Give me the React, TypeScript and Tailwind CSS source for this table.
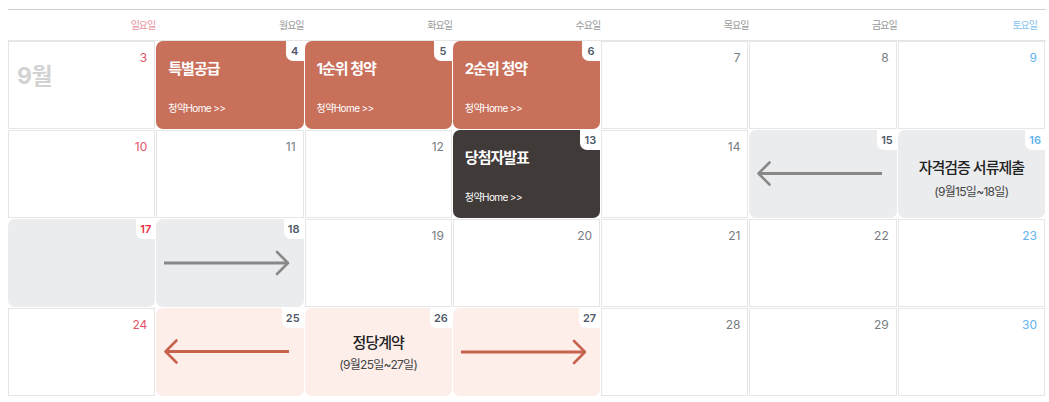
import React from "react";

const FONT = { fontFamily: 'Inter, "Noto Sans CJK KR", "Noto Sans", sans-serif' };

function Badge({ n, color }: { n: number; color: string }) {
  return (
    <div
      className={`absolute top-0 right-0 h-[20px] min-w-[18px] px-[4px] bg-white rounded-bl-[7px] flex items-center justify-center text-[11px] font-semibold leading-none ${color}`}
    >
      {n}
    </div>
  );
}

function Arrow({ dir, color }: { dir: "left" | "right"; color: string }) {
  return (
    <svg className="absolute inset-0" width="147" height="88" viewBox="0 0 147 88" fill="none">
      {dir === "left" ? (
        <>
          <path d="M133 43.5 H9" stroke={color} strokeWidth="3" />
          <path d="M20.5 32.5 L9.5 43.5 L20.5 54.5" stroke={color} strokeWidth="2.6" strokeLinecap="round" strokeLinejoin="round" />
        </>
      ) : (
        <>
          <path d="M8 44 H132" stroke={color} strokeWidth="3" />
          <path d="M121 33 L132 44 L121 55" stroke={color} strokeWidth="2.6" strokeLinecap="round" strokeLinejoin="round" />
        </>
      )}
    </svg>
  );
}

function Plain({ n, color, month }: { n: number; color: string; month?: boolean }) {
  return (
    <div className="border border-[#e6e6e6] bg-white flex justify-between">
      <div className="pl-[8px] pt-[20px] leading-[28px] text-[23px] font-bold text-[#d2d2d2] tracking-[-0.5px]">
        {month ? "9월" : ""}
      </div>
      <div className={`pt-[9px] pr-[7px] leading-[14px] text-[12px] ${color}`}>{n}</div>
    </div>
  );
}

function Event({ n, title, dark }: { n: number; title: string; dark?: boolean }) {
  return (
    <div className={`relative rounded-[7px] ${dark ? "bg-[#403a39]" : "bg-[#c9705b]"} text-white pl-[12px] pt-[18px]`}>
      <Badge n={n} color="text-[#505868]" />
      <div className="text-[15px] font-bold leading-[20px] tracking-[-1px]">{title}</div>
      <div className="mt-[22px] text-[10px] leading-[14px] tracking-[-0.6px]">청약Home &gt;&gt;</div>
    </div>
  );
}

function Block({
  n,
  bg,
  numColor,
  children,
}: {
  n: number;
  bg: string;
  numColor: string;
  children?: React.ReactNode;
}) {
  return (
    <div className={`relative rounded-[7px] ${bg}`}>
      {children}
      <Badge n={n} color={numColor} />
    </div>
  );
}

const SUN = "text-[#e5536b]";
const SAT = "text-[#62b4ef]";
const WK = "text-[#777b82]";

export default function App() {
  const labels = ["일요일", "월요일", "화요일", "수요일", "목요일", "금요일", "토요일"];
  const labelColors = ["text-[#e8929e]", "text-[#999]", "text-[#999]", "text-[#999]", "text-[#999]", "text-[#999]", "text-[#86c2ef]"];
  return (
    <div className="w-[1049px] h-[402px] bg-white pt-[9px] pl-[8px]" style={FONT}>
      <div className="w-[1038px] h-[32px] border-t border-t-[#cfcfcf] border-b border-b-[#e6e6e6]">
        <div className="w-[1037px] h-full grid grid-cols-7 gap-x-[1px]">
          {labels.map((l, i) => (
            <div
              key={l}
              className={`flex items-center justify-end text-[10px] tracking-[-1px] leading-none ${labelColors[i]} ${i === 6 ? "pr-[8px]" : ""}`}
            >
              {l}
            </div>
          ))}
        </div>
      </div>
      <div className="w-[1037px] grid grid-cols-7 gap-[1px] auto-rows-[88px]">
        {/* Row 1 */}
        <Plain n={3} color={SUN} month />
        <Event n={4} title="특별공급" />
        <Event n={5} title="1순위 청약" />
        <Event n={6} title="2순위 청약" />
        <Plain n={7} color={WK} />
        <Plain n={8} color={WK} />
        <Plain n={9} color={SAT} />
        {/* Row 2 */}
        <Plain n={10} color={SUN} />
        <Plain n={11} color={WK} />
        <Plain n={12} color={WK} />
        <Event n={13} title="당첨자발표" dark />
        <Plain n={14} color={WK} />
        <Block n={15} bg="bg-[#ebecee]" numColor="text-[#505868]">
          <Arrow dir="left" color="#888888" />
        </Block>
        <Block n={16} bg="bg-[#ebecee]" numColor={SAT}>
          <div className="flex flex-col items-center pt-[28px] text-[#222]">
            <div className="text-[15px] font-medium leading-[20px] tracking-[-1px]">자격검증 서류제출</div>
            <div className="mt-[6px] text-[12px] leading-[16px] tracking-[-0.7px] text-[#444]">(9월15일~18일)</div>
          </div>
        </Block>
        {/* Row 3 */}
        <Block n={17} bg="bg-[#ebecee]" numColor="text-[#e8293d]" />
        <Block n={18} bg="bg-[#ebecee]" numColor="text-[#505868]">
          <Arrow dir="right" color="#888888" />
        </Block>
        <Plain n={19} color={WK} />
        <Plain n={20} color={WK} />
        <Plain n={21} color={WK} />
        <Plain n={22} color={WK} />
        <Plain n={23} color={SAT} />
        {/* Row 4 */}
        <Plain n={24} color={SUN} />
        <Block n={25} bg="bg-[#fdeeea]" numColor="text-[#505868]">
          <Arrow dir="left" color="#c6624d" />
        </Block>
        <Block n={26} bg="bg-[#fdeeea]" numColor="text-[#505868]">
          <div className="flex flex-col items-center pt-[25px] text-[#222]">
            <div className="text-[15px] font-medium leading-[20px] tracking-[-1px]">정당계약</div>
            <div className="mt-[4px] text-[12px] leading-[16px] tracking-[-0.7px] text-[#444]">(9월25일~27일)</div>
          </div>
        </Block>
        <Block n={27} bg="bg-[#fdeeea]" numColor="text-[#505868]">
          <Arrow dir="right" color="#c6624d" />
        </Block>
        <Plain n={28} color={WK} />
        <Plain n={29} color={WK} />
        <Plain n={30} color={SAT} />
      </div>
    </div>
  );
}
